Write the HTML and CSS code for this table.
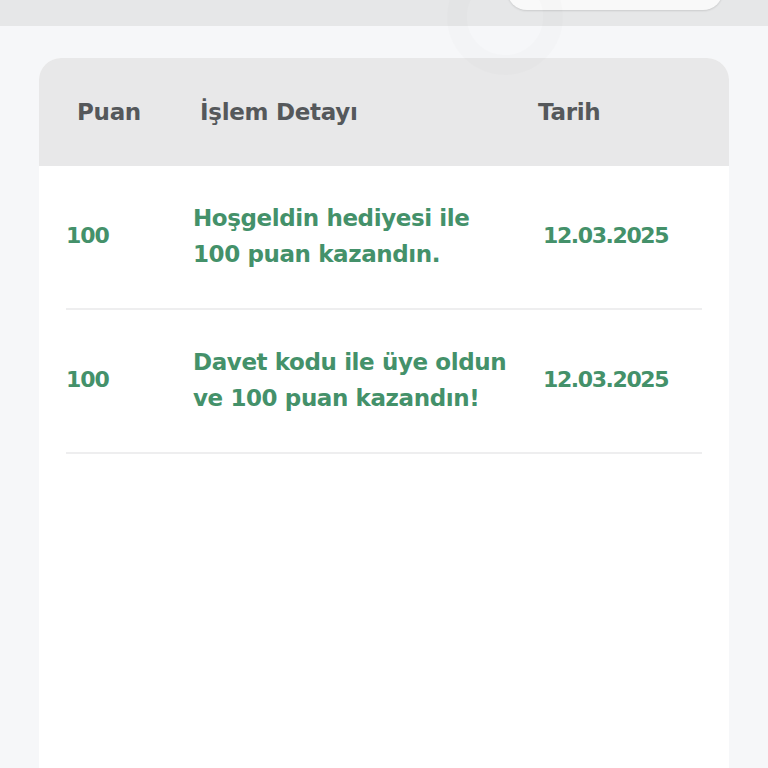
FILE: index.html
```html
<!DOCTYPE html>
<html lang="tr">
<head>
<meta charset="utf-8">
<link rel="stylesheet" href="styles.css">
</head>
<body>
<div class="topbar">
  <div class="pill"></div>
</div>
<div class="ring"></div>
<main class="page">
  <section class="card">
    <div class="thead">
      <div class="th th-puan">Puan</div>
      <div class="th th-detail">İşlem Detayı</div>
      <div class="th th-date">Tarih</div>
    </div>
    <div class="row">
      <div class="td td-puan">100</div>
      <div class="td td-detail">Hoşgeldin hediyesi ile<br>100 puan kazandın.</div>
      <div class="td td-date">12.03.2025</div>
    </div>
    <div class="row">
      <div class="td td-puan">100</div>
      <div class="td td-detail">Davet kodu ile üye oldun<br>ve 100 puan kazandın!</div>
      <div class="td td-date">12.03.2025</div>
    </div>
  </section>
</main>
</body>
</html>
```
FILE: styles.css
```css
* { box-sizing: border-box; }
html, body { margin: 0; padding: 0; }
body {
  background: #f6f7f9;
  font-family: "DejaVu Sans", "Open Sans", sans-serif;
  height: 768px;
  overflow: hidden;
  position: relative;
}
.topbar {
  height: 26px;
  background: #e6e7e8;
  position: relative;
}
.pill {
  position: absolute;
  left: 507px;
  top: -30px;
  width: 216px;
  height: 40px;
  background: #f9f9f9;
  border-radius: 20px;
  box-shadow: 0 1px 2px rgba(0,0,0,0.12);
}
.ring {
  position: absolute;
  left: 447px;
  top: -41px;
  width: 116px;
  height: 116px;
  border-radius: 50%;
  border: 20px solid rgba(0,0,0,0.012);
  pointer-events: none;
  z-index: 2;
}
.page {
  padding: 32px 39px 0 39px;
}
.card {
  background: #ffffff;
  border-radius: 22px 22px 0 0;
  height: 720px;
  overflow: hidden;
}
.thead {
  display: grid;
  grid-template-columns: 123px 338px 1fr;
  align-items: center;
  height: 108px;
  background: #e8e8e9;
  padding-left: 38px;
}
.th {
  font-size: 23px;
  font-weight: 700;
  color: #55585b;
  letter-spacing: -0.3px;
}
.row {
  display: grid;
  grid-template-columns: 127px 350px 1fr;
  align-items: center;
  height: 144px;
  margin: 0 27px;
  border-bottom: 2px solid #eeeeef;
  padding-bottom: 2px;
}
.td {
  font-size: 23px;
  font-weight: 700;
  color: #44916a;
  letter-spacing: -0.4px;
  line-height: 36px;
}
.td-puan { font-size: 22px; letter-spacing: -1px; }
.td-date { font-size: 22px; letter-spacing: -1.4px; }
```
